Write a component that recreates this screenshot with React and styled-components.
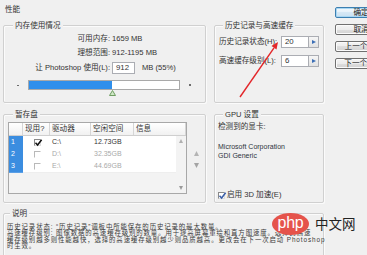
import React from "react";
import styled, { createGlobalStyle } from "styled-components";

const GlobalStyle = createGlobalStyle`
  html, body { margin: 0; padding: 0; background: #f0f0f0; }
  body {
    font-family: "Liberation Sans", "Noto Sans CJK SC", sans-serif;
    color: #333;
  }
  * { box-sizing: border-box; }
`;

const Dialog = styled.div`
  position: relative;
  width: 367px;
  height: 255px;
  overflow: hidden;
  display: flex;
  align-items: flex-start;
  padding-left: 3px;
`;

const MainPane = styled.div`
  display: flex;
  flex-direction: column;
  width: 321px;
  flex: none;
`;

const Title = styled.div`
  height: 25px;
  padding-left: 2px;
  font-size: 7.6px;
  line-height: 20px;
`;

const Sections = styled.div`
  display: grid;
  grid-template-columns: 203px 110px;
  grid-template-rows: 78px 89px 60px;
  column-gap: 8px;
  row-gap: 11px;
`;

const Group = styled.div`
  position: relative;
  grid-column: ${(p) => (p.$wide ? "1 / -1" : "auto")};
  margin-top: ${(p) => p.$shift || 0}px;
  border: 1px solid #d0d0d0;
  border-radius: 2px;
  box-shadow: inset 1px 1px 0 #fbfbfb, 1px 1px 0 #fbfbfb;
  padding: ${(p) => p.$pad};
  font-size: 7.6px;
  display: flex;
  flex-direction: ${(p) => p.$dir || "column"};
`;

const Legend = styled.span`
  position: absolute;
  top: -6px;
  left: ${(p) => p.$left}px;
  padding: 0 2px;
  background: #f0f0f0;
  font-size: 7.6px;
  line-height: 11px;
  white-space: nowrap;
`;

/* memory */
const InfoGrid = styled.div`
  display: grid;
  grid-template-columns: 106px auto;
  grid-template-rows: 14px 14px 16px;
  column-gap: 2px;
  align-items: center;
  line-height: 10px;
`;

const InfoLabel = styled.span`
  text-align: right;
  white-space: nowrap;
`;

const InfoValue = styled.span`
  display: flex;
  align-items: center;
  white-space: nowrap;
`;

const NumberField = styled.span`
  display: inline-flex;
  align-items: center;
  width: ${(p) => p.$w}px;
  height: ${(p) => p.$h}px;
  background: #fff;
  border: 1px solid #abadb3;
  padding-left: ${(p) => p.$pl || 2}px;
  font-size: 7.8px;
  line-height: 8px;
  flex: none;
`;

const Unit = styled.span`
  margin-left: 7px;
`;

const SliderRow = styled.div`
  display: flex;
  align-items: center;
  margin-top: 4px;
  padding-left: 13px;
  height: 10px;
`;

const Tick = styled.span`
  width: 2px;
  height: ${(p) => p.$h}px;
  background: #6d6d6d;
  flex: none;
  margin: ${(p) => p.$m};
`;

const Track = styled.div`
  position: relative;
  width: 152px;
  height: 10px;
  border: 1px solid #a9a9a9;
  background: #fff;
  flex: none;
`;

const Fill = styled.div`
  height: 100%;
  background: #2f8fec;
`;

const Thumb = styled.svg`
  position: absolute;
  top: 9px;
  display: block;
`;

/* history */
const FieldStack = styled.div`
  display: flex;
  flex-direction: column;
  gap: 7px;
`;

const FieldRow = styled.div`
  display: flex;
  align-items: center;
  height: 12px;
`;

const FieldLabel = styled.span`
  width: 62px;
  flex: none;
  white-space: nowrap;
  line-height: 10px;
`;

const Spin = styled.span`
  width: 10px;
  height: 12px;
  border: 1px solid #abadb3;
  border-left: none;
  background: linear-gradient(#f6f6f6, #e2e2e2);
  display: flex;
  align-items: center;
  justify-content: center;
  flex: none;
`;

/* scratch table */
const Table = styled.div`
  width: 179px;
  height: 72px;
  border: 1px solid #a8a8a8;
  display: flex;
  flex-direction: column;
  background: #f3f3f3;
  flex: none;
`;

const cols = "14px 27px 41px 43px 1fr";

const HeaderRow = styled.div`
  display: grid;
  grid-template-columns: ${cols};
  height: 13px;
  border-bottom: 1px solid #cfcfcf;
  background: linear-gradient(#ffffff, #f1f1f1);
  flex: none;
`;

const HeadCell = styled.span`
  border-right: 1px solid #d6d6d6;
  padding-left: 2px;
  font-size: 7.6px;
  line-height: 12px;
  white-space: nowrap;
  overflow: hidden;
`;

const TableBody = styled.div`
  flex: 1;
  display: flex;
  min-height: 0;
`;

const Rows = styled.div`
  flex: 1;
  display: flex;
  flex-direction: column;
`;

const Row = styled.div`
  display: grid;
  grid-template-columns: ${cols};
  height: 12px;
  background: #fff;
  color: ${(p) => (p.$dim ? "#a9a9a9" : "#333")};
  font-size: 7px;
  line-height: 12px;
`;

const NumCell = styled.span`
  background: #3b8de0;
  color: #fff;
  padding-left: 2px;
  border-bottom: 1px solid #5a9fe6;
`;

const Cell = styled.span`
  padding-left: ${(p) => p.$pl || 2}px;
  display: flex;
  align-items: center;
  justify-content: ${(p) => (p.$center ? "center" : "flex-start")};
  white-space: nowrap;
  border-bottom: 1px solid #eeeeee;
`;

const ScrollBar = styled.div`
  width: 10px;
  flex: none;
  display: flex;
  flex-direction: column;
  justify-content: space-between;
  background: #f3f3f3;
`;

const ArrowBox = styled.span`
  width: 10px;
  height: 10px;
  display: flex;
  align-items: center;
  justify-content: center;
`;

const OrderColumn = styled.div`
  flex: 1;
  display: flex;
  flex-direction: column;
  align-items: center;
  padding-top: 26px;
  gap: 2px;
`;

/* gpu */
const Plain = styled.div`
  line-height: 11px;
  white-space: nowrap;
`;

const Adapter = styled.div`
  margin-top: ${(p) => p.$mt || 0}px;
  font-size: 7px;
  line-height: 9px;
  color: #2e3440;
  white-space: nowrap;
`;

const CheckRow = styled.div`
  margin-top: auto;
  height: 10px;
  display: flex;
  align-items: center;
  gap: 2px;
  white-space: nowrap;
  line-height: 10px;
`;

const Box = styled.span`
  width: 7px;
  height: 7px;
  flex: none;
  display: block;
  background: ${(p) => (p.$off ? "transparent" : "#fff")};
  border-top: 1px solid ${(p) => (p.$off ? "#b9b9b9" : "#8a8a8a")};
  border-left: 1px solid ${(p) => (p.$off ? "#b9b9b9" : "#8a8a8a")};
  border-right: 1px solid ${(p) => (p.$off ? "transparent" : "#dcdcdc")};
  border-bottom: 1px solid ${(p) => (p.$off ? "transparent" : "#dcdcdc")};
  position: relative;
`;

const Tickmark = styled.svg`
  position: absolute;
  left: -1px;
  top: -2px;
`;

/* description */
const DescText = styled.div`
  font-size: 6.4px;
  letter-spacing: 0.9px;
  line-height: 6.4px;
  white-space: nowrap;
  color: #3a3a3a;
`;

/* buttons */
const ButtonColumn = styled.div`
  margin-left: 11px;
  padding-top: 7px;
  display: flex;
  flex-direction: column;
  gap: 6px;
  flex: none;
`;

const Button = styled.div`
  width: 52px;
  height: 11px;
  border: 1px solid ${(p) => (p.$default ? "#3c7fb1" : "#707070")};
  border-radius: 2px;
  background: ${(p) =>
    p.$default
      ? "linear-gradient(#f2f8fc, #e6f1f9 50%, #d6e8f5 50%, #c9e0f1)"
      : "linear-gradient(#f4f4f4, #ececec 50%, #dedede 50%, #d2d2d2)"};
  box-shadow: inset 0 0 0 1px ${(p) => (p.$default ? "#a9d7f3" : "#fbfbfb")};
  font-size: 7.6px;
  line-height: 9px;
  text-align: center;
  white-space: nowrap;
  color: #222;
`;

/* overlays */
const Overlay = styled.svg`
  position: absolute;
  left: 0;
  top: 0;
  pointer-events: none;
`;

const Watermark = styled.div`
  position: absolute;
  left: 272px;
  top: 213px;
  display: flex;
  align-items: center;
  gap: 6px;
`;

const PhpBadge = styled.span`
  width: 37px;
  height: 22px;
  border-radius: 50%;
  background: #e5534b;
  color: #fff;
  font-family: "Liberation Sans", sans-serif;
  font-size: 16px;
  line-height: 19px;
  text-align: center;
  letter-spacing: -0.3px;
`;

const SiteName = styled.span`
  font-family: "Noto Sans CJK SC", sans-serif;
  font-size: 13.5px;
  line-height: 16px;
  color: #222;
  margin-top: -3px;
`;

const Tri = ({ dir, color = "#a0a0a0", s = 5 }) => {
  const pts =
    dir === "up"
      ? `0,${s} ${s},${s} ${s / 2},0`
      : dir === "down"
      ? `0,0 ${s},0 ${s / 2},${s}`
      : `0,0 ${s},${s / 2} 0,${s}`;
  return (
    <svg width={s} height={s} viewBox={`0 0 ${s} ${s}`} style={{ display: "block" }}>
      <polygon points={pts} fill={color} />
    </svg>
  );
};

const CheckBox = ({ checked, off, color = "#111" }) => (
  <Box $off={off}>
    {checked && (
      <Tickmark width="9" height="9" viewBox="0 0 9 9">
        <path d="M1.5 4.8 L3.6 7 L7.6 1.8" fill="none" stroke={color} strokeWidth="1.5" />
      </Tickmark>
    )}
  </Box>
);

const drives = [
  { n: "1", on: true, d: "C:\\", free: "12.73GB" },
  { n: "2", on: false, d: "D:\\", free: "32.35GB" },
  { n: "3", on: false, d: "E:\\", free: "44.69GB" },
];

export default function App() {
  return (
    <>
      <GlobalStyle />
      <Dialog>
        <MainPane>
          <Title>性能</Title>
          <Sections>
            <Group $pad="6px 0 0 0">
              <Legend $left={9}>内存使用情况</Legend>
              <InfoGrid>
                <InfoLabel>可用内存:</InfoLabel>
                <InfoValue>1659 MB</InfoValue>
                <InfoLabel>理想范围:</InfoLabel>
                <InfoValue>912-1195 MB</InfoValue>
                <InfoLabel>让 Photoshop 使用(L):</InfoLabel>
                <InfoValue>
                  <NumberField $w={23} $h={12} $pl={3}>912</NumberField>
                  <Unit>MB (55%)</Unit>
                </InfoValue>
              </InfoGrid>
              <SliderRow>
                <Tick $h={1} $m="0 9px 0 0" />
                <Track>
                  <Fill style={{ width: "55%" }} />
                  <Thumb width="7" height="6" viewBox="0 0 7 6" style={{ left: "80px" }}>
                    <polygon points="0.5,5.5 6.5,5.5 3.5,0.5" fill="#cfe8c6" stroke="#6f9d62" strokeWidth="1" />
                  </Thumb>
                </Track>
                <Tick $h={2} $m="0 0 0 9px" />
              </SliderRow>
            </Group>

            <Group $pad="10px 0 0 4px">
              <Legend $left={8}>历史记录与高速缓存</Legend>
              <FieldStack>
                <FieldRow>
                  <FieldLabel>历史记录状态(H):</FieldLabel>
                  <NumberField $w={28} $h={12} $pl={3}>20</NumberField>
                  <Spin><Tri dir="right" color="#3d6fb6" s={4} /></Spin>
                </FieldRow>
                <FieldRow>
                  <FieldLabel>高速缓存级别(L):</FieldLabel>
                  <NumberField $w={28} $h={12} $pl={3}>6</NumberField>
                  <Spin><Tri dir="right" color="#3d6fb6" s={4} /></Spin>
                </FieldRow>
              </FieldStack>
            </Group>

            <Group $pad="7px 0 0 4px" $dir="row">
              <Legend $left={9}>暂存盘</Legend>
              <Table>
                <HeaderRow>
                  <HeadCell />
                  <HeadCell>现用?</HeadCell>
                  <HeadCell>驱动器</HeadCell>
                  <HeadCell>空闲空间</HeadCell>
                  <HeadCell>信息</HeadCell>
                </HeaderRow>
                <TableBody>
                  <Rows>
                    {drives.map((r) => (
                      <Row key={r.n} $dim={!r.on}>
                        <NumCell>{r.n}</NumCell>
                        <Cell $center $pl={0}>
                          <CheckBox checked={r.on} off={!r.on} />
                        </Cell>
                        <Cell>{r.d}</Cell>
                        <Cell $pl={3}>{r.free}</Cell>
                        <Cell />
                      </Row>
                    ))}
                  </Rows>
                  <ScrollBar>
                    <ArrowBox><Tri dir="up" color="#b0b0b0" s={4} /></ArrowBox>
                    <ArrowBox><Tri dir="down" color="#9a9a9a" s={4} /></ArrowBox>
                  </ScrollBar>
                </TableBody>
              </Table>
              <OrderColumn>
                <ArrowBox><Tri dir="up" color="#b4b4b4" s={5} /></ArrowBox>
                <ArrowBox><Tri dir="down" color="#a4a4a4" s={5} /></ArrowBox>
              </OrderColumn>
            </Group>

            <Group $pad="6px 0 2px 3px">
              <Legend $left={8}>GPU 设置</Legend>
              <Plain>检测到的显卡:</Plain>
              <Adapter $mt={10}>Microsoft Corporation</Adapter>
              <Adapter>GDI Generic</Adapter>
              <CheckRow>
                <CheckBox checked color="#3b5fa8" />
                <span>启用 3D 加速(E)</span>
              </CheckRow>
            </Group>

            <Group $wide $shift={-1} $pad="10px 0 0 3px">
              <Legend $left={6}>说明</Legend>
              <DescText>历史记录状态: “历史记录”调板中所能保存的历史记录的最大数量。</DescText>
              <DescText>高速缓存级别: 图像数据的高速缓存级别的数量。用于提高屏幕重绘和直方图速度。选择的高速</DescText>
              <DescText>缓存级别越多则性能越快，选择的高速缓存级别越少则品质越高。更改会在下一次启动 Photoshop</DescText>
              <DescText>时生效。</DescText>
            </Group>
          </Sections>
        </MainPane>

        <ButtonColumn>
          <Button $default>确定</Button>
          <Button>取消</Button>
          <Button>上一个(P)</Button>
          <Button>下一个(N)</Button>
        </ButtonColumn>

        <Watermark>
          <PhpBadge>php</PhpBadge>
          <SiteName>中文网</SiteName>
        </Watermark>

        <Overlay width="367" height="255" viewBox="0 0 367 255">
          <line x1="240" y1="97" x2="274" y2="47.8" stroke="#e3262a" strokeWidth="1.4" />
          <polygon points="278,42 276.5,49.5 271.5,46.1" fill="#e3262a" />
        </Overlay>
      </Dialog>
    </>
  );
}
